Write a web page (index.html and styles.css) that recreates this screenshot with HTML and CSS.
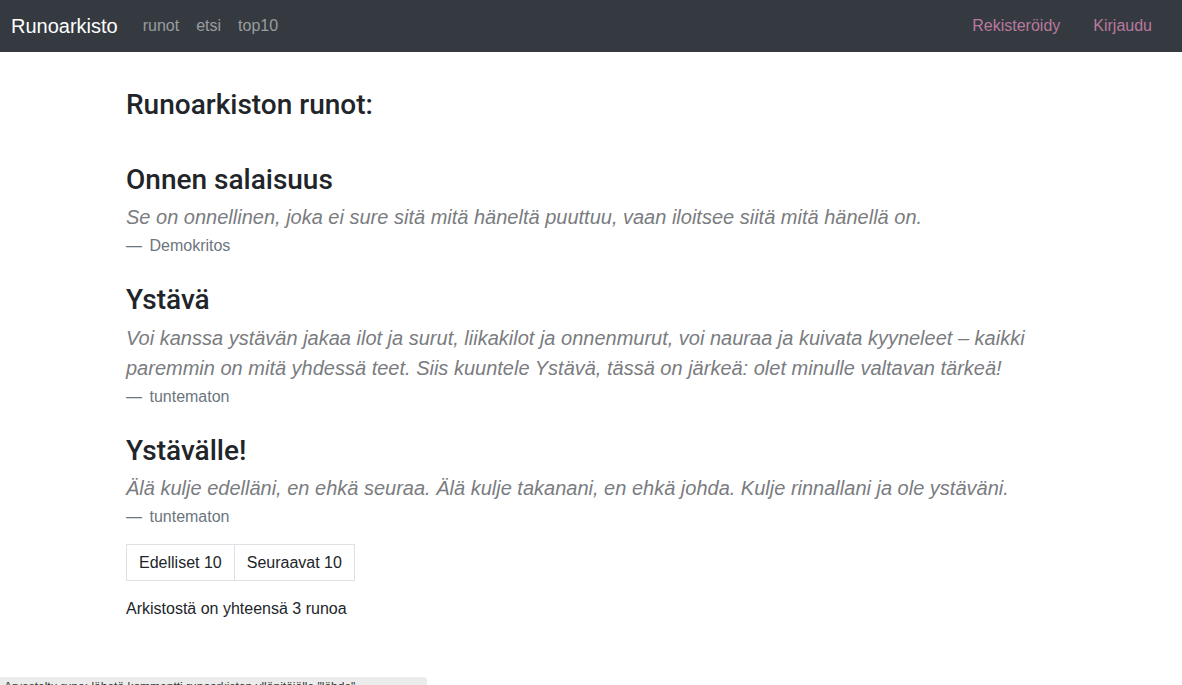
FILE: index.html
```html
<!DOCTYPE html>
<html lang="fi">
<head>
<meta charset="utf-8">
<title>Runoarkisto</title>
<link rel="stylesheet" href="styles.css">
</head>
<body>
<nav class="navbar">
  <div class="nav-left">
    <a class="brand" href="#">Runoarkisto</a>
    <a class="nav-link" href="#">runot</a>
    <a class="nav-link" href="#">etsi</a>
    <a class="nav-link" href="#">top10</a>
  </div>
  <div class="nav-right">
    <a class="nav-link pink" href="#">Rekisteröidy</a>
    <a class="nav-link pink" href="#">Kirjaudu</a>
  </div>
</nav>
<main class="container">
  <h3 class="page-title">Runoarkiston runot:</h3>
  <section class="poem">
    <h2 class="poem-title">Onnen salaisuus</h2>
    <blockquote class="quote">
      <p class="quote-text">Se on onnellinen, joka ei sure sitä mitä häneltä puuttuu, vaan iloitsee siitä mitä hänellä on.</p>
      <footer class="quote-footer">Demokritos</footer>
    </blockquote>
  </section>
  <section class="poem">
    <h2 class="poem-title">Ystävä</h2>
    <blockquote class="quote">
      <p class="quote-text">Voi kanssa ystävän jakaa ilot ja surut, liikakilot ja onnenmurut, voi nauraa ja kuivata kyyneleet – kaikki paremmin on mitä yhdessä teet. Siis kuuntele Ystävä, tässä on järkeä: olet minulle valtavan tärkeä!</p>
      <footer class="quote-footer">tuntematon</footer>
    </blockquote>
  </section>
  <section class="poem">
    <h2 class="poem-title">Ystävälle!</h2>
    <blockquote class="quote">
      <p class="quote-text">Älä kulje edelläni, en ehkä seuraa. Älä kulje takanani, en ehkä johda. Kulje rinnallani ja ole ystäväni.</p>
      <footer class="quote-footer">tuntematon</footer>
    </blockquote>
  </section>
  <ul class="pagination">
    <li><a class="page-link" href="#">Edelliset 10</a></li>
    <li><a class="page-link" href="#">Seuraavat 10</a></li>
  </ul>
  <p class="total">Arkistostä on yhteensä 3 runoa</p>
</main>
<div class="statusbar">Arvosteltu runo: lähetä kommentti runoarkiston ylläpitäjälle "lähde"</div>
</body>
</html>
```
FILE: styles.css
```css
* { box-sizing: border-box; }
html, body { margin: 0; padding: 0; }
body {
  font-family: "Liberation Sans", Arial, sans-serif;
  font-size: 16px;
  line-height: 1.5;
  color: #212529;
  background: #fff;
}
a { text-decoration: none; }
.navbar {
  height: 52px;
  background: #343a40;
  display: flex;
  align-items: center;
  justify-content: space-between;
  padding: 0 30px 0 11px;
}
.nav-left, .nav-right { display: flex; align-items: center; }
.brand {
  color: #fff;
  font-size: 20px;
  margin-right: 16px;
}
.nav-link {
  color: rgba(255,255,255,.5);
  font-size: 16px;
  padding: 0 8px 0 9px;
}
.nav-right .nav-link { padding: 0 0 0 33px; }
.nav-link.pink { color: #b9799e; }
.container {
  width: 960px;
  margin: 0 auto;
  padding: 0 15px;
}
.page-title,
.poem-title {
  font-family: Roboto, "Liberation Sans", sans-serif;
  font-size: 28px;
  font-weight: 500;
  line-height: 1.2;
  color: #212529;
}
.page-title { margin: 36px 0 0; }
.poem-title { margin: 0 0 6px; }
.page-title + .poem { margin-top: 41px; }
.poem + .poem { margin-top: 25px; }
.quote { margin: 0; }
.quote-text {
  margin: 0;
  font-size: 20px;
  line-height: 30px;
  font-style: italic;
  color: #7a7c7f;
}
.quote-footer {
  margin-top: 2px;
  font-size: 16px;
  color: #6c757d;
  line-height: 24px;
}
.quote-footer::before {
  content: "\2014\00A0";
  margin-right: 3px;
}
.pagination {
  display: flex;
  list-style: none;
  padding: 0;
  margin: 15px 0 16px;
}
.page-link {
  display: block;
  padding: 8px 12px;
  line-height: 19px;
  color: #212529;
  border: 1px solid #dee2e6;
}
.pagination li + li .page-link { margin-left: -1px; }
.total { margin: 0; }
.statusbar {
  position: fixed;
  left: 0;
  bottom: 0;
  width: 427px;
  height: 8px;
  overflow: hidden;
  background: #ececec;
  border-top-right-radius: 3px;
  font-size: 12px;
  line-height: 14px;
  padding: 3px 0 0 4px;
  color: #333;
  white-space: nowrap;
}
```
